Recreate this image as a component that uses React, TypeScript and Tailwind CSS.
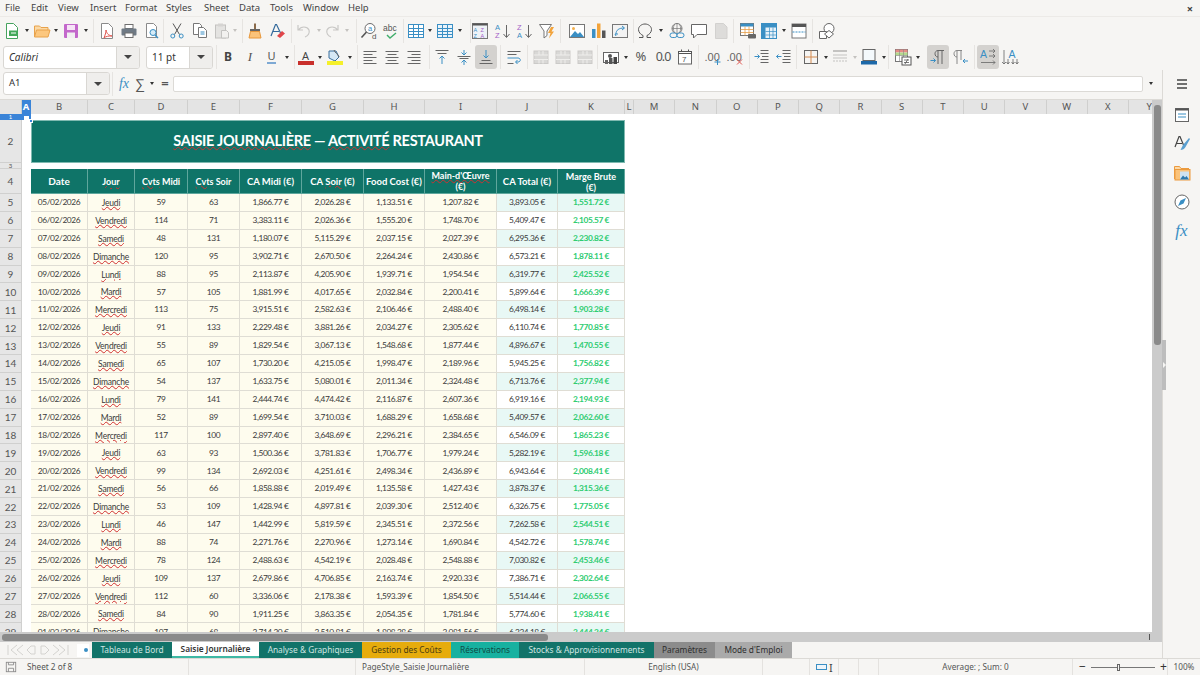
import type { ReactNode } from 'react'

// ---- small icon helpers ----
function Ic({ children }: { children: ReactNode }) {
  return (
    <svg viewBox="0 0 18 18" className="h-[18px] w-[18px]" fill="none" strokeWidth="1">
      {children}
    </svg>
  )
}

function S({ w, children, on }: { w: string; children?: ReactNode; on?: boolean }) {
  return (
    <div className={`flex h-[24px] shrink-0 items-center justify-center rounded-[3px] ${w} ${on ? 'bg-[#d4d2cf]' : ''}`}>
      {children}
    </div>
  )
}

function Caret({ w, off }: { w: string; off?: boolean }) {
  return (
    <div className={`flex h-[24px] shrink-0 items-center justify-center ${w}`}>
      <div className={`h-0 w-0 border-x-[2.5px] border-t-[3px] border-x-transparent ${off ? 'border-t-[#c4c2bf]' : 'border-t-[#333]'}`} />
    </div>
  )
}

function Sep({ cls }: { cls: string }) {
  return <div className={`h-[24px] w-px shrink-0 bg-[#e6e4e1] ${cls}`} />
}

const gridIcon = (c: string, fill: string) => (
  <Ic>
    <rect x="1.5" y="2.5" width="15" height="13" fill={fill} stroke={c} />
    <path d="M1.5 6.5h15M1.5 9.5h15M1.5 12.5h15M6.5 2.5v13M11.5 2.5v13" stroke={c} />
  </Ic>
)

const NewDoc = () => (
  <Ic>
    <path d="M3.5 1.5h7l4 4v11h-11z" fill="#fff" stroke="#46a35e" />
    <rect x="6" y="8.5" width="9" height="5.5" fill="#43a85a" />
    <path d="M8 11h5" stroke="#fff" />
  </Ic>
)
const OpenFolder = () => (
  <Ic>
    <path d="M1.5 15V4h5l1.5 1.5h7V8" fill="#fbd9a5" stroke="#e8a24b" />
    <path d="M1.5 15l2-7h13.5l-2 7z" fill="#fcc77e" stroke="#e8a24b" />
  </Ic>
)
const Floppy = () => (
  <Ic>
    <rect x="2" y="2" width="14" height="14" rx="1" fill="#c368cb" />
    <rect x="5" y="3" width="8" height="5" fill="#f6e4f7" />
    <rect x="5" y="10.5" width="8" height="5.5" fill="#f1eff1" />
  </Ic>
)
const Pdf = () => (
  <Ic>
    <path d="M3.5 1.5h7l4 4v11h-11z" fill="#fff" stroke="#8a8a8a" />
    <path d="M8 8c1 4 2 5 6 6-3 0-6 0-8 2 1-3 2-5 2-8z" stroke="#e0564f" fill="none" />
  </Ic>
)
const Printer = () => (
  <Ic>
    <rect x="5" y="2.5" width="8" height="4" fill="#fff" stroke="#6e6e6e" />
    <rect x="1.5" y="6.5" width="15" height="7" rx="1" fill="#6f7a85" />
    <rect x="5" y="11" width="8" height="4.5" fill="#fff" stroke="#6e6e6e" />
  </Ic>
)
const Preview = () => (
  <Ic>
    <path d="M3.5 1.5h7l3 3v11h-10z" fill="#fff" stroke="#8a8a8a" />
    <circle cx="10" cy="10.5" r="3" fill="#d6ecf8" stroke="#3a8fc4" />
    <path d="M12 13l3 3" stroke="#3a8fc4" strokeWidth="1.5" />
  </Ic>
)
const Scissors = () => (
  <Ic>
    <path d="M5 1.5l6.5 11M13 1.5L6.5 12.5" stroke="#555" />
    <circle cx="4.8" cy="14" r="2" stroke="#3a8fc4" />
    <circle cx="13.2" cy="14" r="2" stroke="#3a8fc4" />
  </Ic>
)
const Copy = () => (
  <Ic>
    <path d="M2.5 1.5h6l2 2v9h-8z" fill="#fff" stroke="#777" />
    <path d="M7.5 5.5h5l3 3v7h-8z" fill="#fff" stroke="#777" />
    <path d="M9.5 10h4M9.5 12h4" stroke="#3a8fc4" />
  </Ic>
)
const Paste = () => (
  <Ic>
    <rect x="2.5" y="3" width="10" height="13" fill="#e4e3e1" stroke="#c3c2c0" />
    <rect x="5" y="1.5" width="5" height="3" fill="#d5d4d2" />
    <path d="M8.5 8.5h5l2 2v5.5h-7z" fill="#f2f1ef" stroke="#c3c2c0" />
  </Ic>
)
const Brush = () => (
  <Ic>
    <path d="M8 1.5h2v6H8z" fill="#8a6a4a" />
    <rect x="4" y="7" width="10" height="2.5" fill="#666" />
    <path d="M4.5 9.5h9l1.5 6.5H3z" fill="#fbc37a" stroke="#e8973a" />
  </Ic>
)
const ClearFmt = () => (
  <Ic>
    <path d="M3 14L7.5 2.5h1L13 12M5 9.5h6" stroke="#356a9c" strokeWidth="1.2" />
    <path d="M9 14l5-5 3 2.5-5 4.5z" fill="#e0464a" />
  </Ic>
)
const Undo = () => (
  <Ic>
    <path d="M3 3v5h5M3.5 8C6 4 12 4 14 8c1 3-1 6-4 7" stroke="#c9c8c6" strokeWidth="1.2" />
  </Ic>
)
const Redo = () => (
  <Ic>
    <path d="M15 3v5h-5M14.5 8C12 4 6 4 4 8c-1 3 1 6 4 7" stroke="#c9c8c6" strokeWidth="1.2" />
  </Ic>
)
const Find = () => (
  <Ic>
    <circle cx="10" cy="6.5" r="5" fill="#fff" stroke="#6a6a6a" />
    <path d="M6.5 10l-5 5.5" stroke="#555" strokeWidth="1.6" />
    <text x="8" y="9" fontSize="7.5" fill="#3a8fc4" fontFamily="Liberation Sans">a</text>
    <text x="12" y="17" fontSize="8" fill="#555" fontFamily="Liberation Sans">d</text>
  </Ic>
)
const Spell = () => (
  <Ic>
    <text x="1" y="9" fontSize="8.5" fill="#555" fontFamily="Liberation Sans">abc</text>
    <path d="M5 13l3 3 6-5" stroke="#3fae6b" strokeWidth="1.4" />
  </Ic>
)
const SortBox = () => (
  <Ic>
    <rect x="1.5" y="1.5" width="15" height="15" fill="#eef2f6" stroke="#777" />
    <rect x="1.5" y="1.5" width="15" height="2" fill="#555" />
    <text x="2.5" y="9.5" fontSize="5.5" fill="#3a8fc4" fontFamily="Liberation Sans">A</text>
    <text x="9.5" y="9.5" fontSize="5.5" fill="#a45ec7" fontFamily="Liberation Sans">Z</text>
    <text x="2.5" y="15.5" fontSize="5.5" fill="#3a8fc4" fontFamily="Liberation Sans">Z</text>
    <text x="9.5" y="15.5" fontSize="5.5" fill="#a45ec7" fontFamily="Liberation Sans">A</text>
  </Ic>
)
const Sort = ({ a, b, c1, c2 }: { a: string; b: string; c1: string; c2: string }) => (
  <Ic>
    <text x="1" y="8" fontSize="7.5" fill={c1} fontFamily="Liberation Sans">{a}</text>
    <text x="1" y="16" fontSize="7.5" fill={c2} fontFamily="Liberation Sans">{b}</text>
    <path d="M12.5 3v12M9.5 12l3 3.5 3-3.5" stroke="#666" />
  </Ic>
)
const Filter = () => (
  <Ic>
    <path d="M1.5 2.5h12L9 9v4.5L6 16V9z" fill="#fff" stroke="#777" />
    <path d="M13 5l-3 6h2.5L11 16.5 16 9.5h-2.5L16 5z" fill="#f2a33a" />
  </Ic>
)
const Picture = () => (
  <Ic>
    <rect x="1.5" y="2.5" width="15" height="13" fill="#fff" stroke="#777" />
    <circle cx="5.5" cy="6.5" r="1.5" fill="#f4b04c" />
    <path d="M2 15l5-6 3 3 2-2 4 5z" fill="#3a8fc4" />
  </Ic>
)
const Chart = () => (
  <Ic>
    <rect x="2" y="7" width="3.5" height="9" fill="#3a8fc4" />
    <rect x="7" y="1.5" width="3.5" height="14.5" fill="#f2a33a" />
    <rect x="12" y="8.5" width="3.5" height="7.5" fill="#555" />
  </Ic>
)
const Pivot = () => (
  <Ic>
    <rect x="1.5" y="2.5" width="15" height="13" fill="#f3f3f3" stroke="#777" />
    <path d="M5 12c0-4 3-6 8-6M11 4l2.5 2L11 8M5 14l-1-2h3" stroke="#3a8fc4" />
  </Ic>
)
const Omega = () => (
  <Ic>
    <path d="M3 15.5h4v-2C4.5 12.5 2.5 10 2.5 7.5 2.5 4.5 5.5 2 9 2s6.5 2.5 6.5 5.5c0 2.5-2 5-4.5 6v2h4" stroke="#555" />
  </Ic>
)
const Link = () => (
  <Ic>
    <circle cx="9" cy="6.5" r="5" stroke="#777" />
    <path d="M4 6.5h10M9 1.5v10M6.5 2.5c-1.5 2.5-1.5 5.5 0 8M11.5 2.5c1.5 2.5 1.5 5.5 0 8" stroke="#777" strokeWidth=".7" />
    <rect x="2" y="11" width="7" height="4.5" rx="2.2" fill="#f6f5f3" stroke="#3a8fc4" />
    <rect x="9" y="11" width="7" height="4.5" rx="2.2" fill="#f6f5f3" stroke="#3a8fc4" />
  </Ic>
)
const Comment = () => (
  <Ic>
    <path d="M1.5 2.5h15v10H7l-3.5 3.5v-3.5h-2z" fill="#fff" stroke="#666" />
  </Ic>
)
const Note = () => (
  <Ic>
    <path d="M3.5 1.5h8l3.5 3.5v11.5H3.5z" fill="#dddcda" stroke="#d2d1cf" />
  </Ic>
)
const PrintArea = () => (
  <Ic>
    <rect x="1.5" y="1.5" width="13" height="12" fill="#fff" stroke="#777" />
    <rect x="1.5" y="1.5" width="13" height="3" fill="#3a8fc4" />
    <path d="M1.5 7.5h13M1.5 10.5h13M6 4.5v9M10 4.5v9" stroke="#e6a04a" strokeWidth=".8" />
    <rect x="9" y="12" width="8" height="4.5" rx="1" fill="#666" />
  </Ic>
)
const Freeze = () => (
  <Ic>
    <rect x="1.5" y="1.5" width="15" height="15" fill="#e6f1f9" stroke="#3a8fc4" />
    <rect x="1.5" y="1.5" width="15" height="4" fill="#3a8fc4" />
    <rect x="1.5" y="1.5" width="4" height="15" fill="#3a8fc4" />
    <path d="M5.5 9.5h11M5.5 13h11M9.5 5.5v11M13 5.5v11" stroke="#3a8fc4" strokeWidth=".7" />
  </Ic>
)
const HeaderIc = () => (
  <Ic>
    <rect x="2" y="2" width="14" height="14" fill="#fff" stroke="#777" />
    <rect x="2" y="2" width="14" height="3" fill="#555" />
    <path d="M2.5 10h13" stroke="#3a8fc4" strokeDasharray="2 1" />
  </Ic>
)
const Shapes = () => (
  <Ic>
    <circle cx="11" cy="6.5" r="5" fill="#fff" stroke="#666" />
    <path d="M1.5 9.5h7v7h-7z" fill="#fff" stroke="#666" />
    <path d="M11 8.5l4.5 3.5-4.5 4-4.5-4z" fill="#fff" stroke="#666" />
  </Ic>
)

// ---- second toolbar icons ----
const AlignLeft = () => (
  <Ic>
    <path d="M2.5 3.5h13M2.5 6.5h9M2.5 9.5h13M2.5 12.5h9M2.5 15.5h13" stroke="#666" />
  </Ic>
)
const AlignCenter = () => (
  <Ic>
    <path d="M2.5 3.5h13M4.5 6.5h9M2.5 9.5h13M4.5 12.5h9M2.5 15.5h13" stroke="#666" />
  </Ic>
)
const AlignRight = () => (
  <Ic>
    <path d="M2.5 3.5h13M6.5 6.5h9M2.5 9.5h13M6.5 12.5h9M2.5 15.5h13" stroke="#666" />
  </Ic>
)
const VTop = () => (
  <Ic>
    <path d="M2.5 2.5h13M4.5 5.5h9" stroke="#666" />
    <path d="M9 8v8M6.5 10.5L9 8l2.5 2.5" stroke="#3a8fc4" />
  </Ic>
)
const VMid = () => (
  <Ic>
    <path d="M2.5 8.5h13" stroke="#666" />
    <path d="M4.5 10.5h9" stroke="#666" />
    <path d="M9 2v5M6.5 4.5L9 7l2.5-2.5M9 17v-5M6.5 14.5L9 12l2.5 2.5" stroke="#3a8fc4" />
  </Ic>
)
const VBot = () => (
  <Ic>
    <path d="M9 2v8M6.5 7.5L9 10l2.5-2.5" stroke="#3a8fc4" />
    <path d="M4.5 12.5h9M2.5 15.5h13" stroke="#666" />
  </Ic>
)
const Wrap = () => (
  <Ic>
    <path d="M2.5 3.5h13M2.5 6.5h9M2.5 15.5h6" stroke="#666" />
    <path d="M2.5 10h10.5c3 0 3 4 0 4h-2M12.5 12l-2 2 2 2" stroke="#3a8fc4" />
  </Ic>
)
const Merge = () => (
  <Ic>
    <rect x="2" y="3" width="14" height="12.5" fill="#d9d8d6" stroke="#cbcac8" />
    <path d="M2 7h14M2 11.5h14M7 3v4M11 3v4M7 11.5v4M11 11.5v4" stroke="#efeeec" />
  </Ic>
)
const Currency = () => (
  <Ic>
    <rect x="1.5" y="4.5" width="15" height="10" fill="#fff" stroke="#666" />
    <circle cx="8" cy="8" r="2" fill="#555" />
    <rect x="7" y="10" width="3.5" height="6" fill="#555" />
    <rect x="11.5" y="9" width="3.5" height="7" fill="#444" />
    <rect x="3" y="12" width="3" height="4" fill="#666" />
  </Ic>
)
const DateIc = () => (
  <Ic>
    <rect x="2.5" y="3.5" width="13" height="12.5" fill="#fff" stroke="#666" />
    <path d="M2.5 3.5h13v2h-13zM5.5 1.5v2M12.5 1.5v2" stroke="#555" />
    <text x="6" y="14" fontSize="8" fill="#555" fontFamily="Liberation Sans">7</text>
  </Ic>
)
const AddDec = () => (
  <Ic>
    <text x="0.5" y="13" fontSize="11" fill="#666" fontFamily="Liberation Sans">.00</text>
    <path d="M13.5 11v6M10.5 14h6" stroke="#3a8fc4" />
  </Ic>
)
const DelDec = () => (
  <Ic>
    <text x="0.5" y="13" fontSize="11" fill="#666" fontFamily="Liberation Sans">.00</text>
    <path d="M11 11.5l5 5M16 11.5l-5 5" stroke="#e0564f" />
  </Ic>
)
const IndentUp = () => (
  <Ic>
    <path d="M7.5 2.5h8M7.5 5.5h8M9 8.5h6.5M7.5 11.5h8M7.5 14.5h8" stroke="#666" />
    <path d="M1.5 8.5h5M4.5 6.5l2 2-2 2" stroke="#3a8fc4" />
  </Ic>
)
const IndentDown = () => (
  <Ic>
    <path d="M7.5 2.5h8M7.5 5.5h8M9 8.5h6.5M7.5 11.5h8M7.5 14.5h8" stroke="#666" />
    <path d="M6.5 8.5h-5M3.5 6.5l-2 2 2 2" stroke="#3a8fc4" />
  </Ic>
)
const Borders = () => (
  <Ic>
    <rect x="2.5" y="2.5" width="13" height="13" stroke="#666" />
    <path d="M9 2.5v13M2.5 9h13" stroke="#d48a4e" />
  </Ic>
)
const BorderStyle = () => (
  <Ic>
    <path d="M2 3h14" stroke="#c4c3c1" strokeWidth="2" />
    <path d="M2 7h14M2 10h14" stroke="#c4c3c1" />
    <path d="M2 13h14" stroke="#c4c3c1" strokeDasharray="2 1" />
  </Ic>
)
const BorderColor = () => (
  <Ic>
    <rect x="3" y="1.5" width="12" height="11" fill="#f4f9fc" stroke="#666" />
    <rect x="1" y="13" width="16" height="3.5" fill="#1c68a8" />
  </Ic>
)
const CondFmt = () => (
  <Ic>
    <rect x="1.5" y="1.5" width="12" height="12" fill="#fff" stroke="#777" />
    <rect x="1.5" y="1.5" width="12" height="3" fill="#e58a86" />
    <rect x="1.5" y="4.5" width="12" height="3" fill="#b4d98d" />
    <path d="M1.5 7.5h12M5.5 1.5v12M9.5 1.5v12" stroke="#888" strokeWidth=".6" />
    <rect x="8" y="9" width="9" height="8" fill="#fff" stroke="#555" />
    <path d="M10 12h5M10 14.5h5M14 11l-3 5" stroke="#555" strokeWidth=".8" />
  </Ic>
)
const Ltr = () => (
  <Ic>
    <path d="M9 16V2.5h6M13 2.5V16M9 2.5C5 2.5 5 9 9 9" stroke="#666" />
    <path d="M1.5 12.5h5M4.5 10.5l2 2-2 2" stroke="#3a8fc4" />
  </Ic>
)
const Rtl = () => (
  <Ic>
    <path d="M6 16V2.5h5M10 2.5V12M6 2.5C2 2.5 2 9 6 9" stroke="#888" />
    <path d="M17 13h-5M14 11l-2 2 2 2" stroke="#3a8fc4" />
  </Ic>
)
const TextH = () => (
  <Ic>
    <text x="1" y="10" fontSize="10.5" fill="#3a8fc4" fontFamily="Liberation Sans">A</text>
    <path d="M10 3h6M14 1l2 2-2 2M10 8h6M14 6l2 2-2 2M2 14.5h14M14 12.5l2 2-2 2" stroke="#666" strokeWidth=".8" />
  </Ic>
)
const TextV = () => (
  <Ic>
    <text x="7.5" y="10" fontSize="10.5" fill="#3a8fc4" fontFamily="Liberation Sans">A</text>
    <path d="M3 2v14M1 14l2 2 2-2M7 11v5M5.5 14l1.5 2 1.5-2M12 11v5M10.5 14l1.5 2 1.5-2M16 11v5M14.5 14l1.5 2 1.5-2" stroke="#666" strokeWidth=".8" />
  </Ic>
)

// ---- data ----
const rows: string[][] = [
  ['05/02/2026', 'Jeudi', '59', '63', '1,866.77', '2,026.28', '1,133.51', '1,207.82', '3,893.05', '1,551.72'],
  ['06/02/2026', 'Vendredi', '114', '71', '3,383.11', '2,026.36', '1,555.20', '1,748.70', '5,409.47', '2,105.57'],
  ['07/02/2026', 'Samedi', '48', '131', '1,180.07', '5,115.29', '2,037.15', '2,027.39', '6,295.36', '2,230.82'],
  ['08/02/2026', 'Dimanche', '120', '95', '3,902.71', '2,670.50', '2,264.24', '2,430.86', '6,573.21', '1,878.11'],
  ['09/02/2026', 'Lundi', '88', '95', '2,113.87', '4,205.90', '1,939.71', '1,954.54', '6,319.77', '2,425.52'],
  ['10/02/2026', 'Mardi', '57', '105', '1,881.99', '4,017.65', '2,032.84', '2,200.41', '5,899.64', '1,666.39'],
  ['11/02/2026', 'Mercredi', '113', '75', '3,915.51', '2,582.63', '2,106.46', '2,488.40', '6,498.14', '1,903.28'],
  ['12/02/2026', 'Jeudi', '91', '133', '2,229.48', '3,881.26', '2,034.27', '2,305.62', '6,110.74', '1,770.85'],
  ['13/02/2026', 'Vendredi', '55', '89', '1,829.54', '3,067.13', '1,548.68', '1,877.44', '4,896.67', '1,470.55'],
  ['14/02/2026', 'Samedi', '65', '107', '1,730.20', '4,215.05', '1,998.47', '2,189.96', '5,945.25', '1,756.82'],
  ['15/02/2026', 'Dimanche', '54', '137', '1,633.75', '5,080.01', '2,011.34', '2,324.48', '6,713.76', '2,377.94'],
  ['16/02/2026', 'Lundi', '79', '141', '2,444.74', '4,474.42', '2,116.87', '2,607.36', '6,919.16', '2,194.93'],
  ['17/02/2026', 'Mardi', '52', '89', '1,699.54', '3,710.03', '1,688.29', '1,658.68', '5,409.57', '2,062.60'],
  ['18/02/2026', 'Mercredi', '117', '100', '2,897.40', '3,648.69', '2,296.21', '2,384.65', '6,546.09', '1,865.23'],
  ['19/02/2026', 'Jeudi', '63', '93', '1,500.36', '3,781.83', '1,706.77', '1,979.24', '5,282.19', '1,596.18'],
  ['20/02/2026', 'Vendredi', '99', '134', '2,692.03', '4,251.61', '2,498.34', '2,436.89', '6,943.64', '2,008.41'],
  ['21/02/2026', 'Samedi', '56', '66', '1,858.88', '2,019.49', '1,135.58', '1,427.43', '3,878.37', '1,315.36'],
  ['22/02/2026', 'Dimanche', '53', '109', '1,428.94', '4,897.81', '2,039.30', '2,512.40', '6,326.75', '1,775.05'],
  ['23/02/2026', 'Lundi', '46', '147', '1,442.99', '5,819.59', '2,345.51', '2,372.56', '7,262.58', '2,544.51'],
  ['24/02/2026', 'Mardi', '88', '74', '2,271.76', '2,270.96', '1,273.14', '1,690.84', '4,542.72', '1,578.74'],
  ['25/02/2026', 'Mercredi', '78', '124', '2,488.63', '4,542.19', '2,028.48', '2,548.88', '7,030.82', '2,453.46'],
  ['26/02/2026', 'Jeudi', '109', '137', '2,679.86', '4,706.85', '2,163.74', '2,920.33', '7,386.71', '2,302.64'],
  ['27/02/2026', 'Vendredi', '112', '60', '3,336.06', '2,178.38', '1,593.39', '1,854.50', '5,514.44', '2,066.55'],
  ['28/02/2026', 'Samedi', '84', '90', '1,911.25', '3,863.35', '2,054.35', '1,781.84', '5,774.60', '1,938.41'],
  ['01/03/2026', 'Dimanche', '107', '68', '2,714.20', '2,510.81', '1,808.28', '2,081.56', '6,224.18', '2,444.24'],
]

const COLS = 'grid grid-cols-[22px_9px_57px_47px_53px_52px_62px_62px_61px_72px_61px_67px_9px_1fr]'
const moreCols = ['M', 'N', 'O', 'P', 'Q', 'R', 'S', 'T', 'U', 'V', 'W', 'X', 'Y']

function W({ children }: { children: ReactNode }) {
  return <span className="underline decoration-[#d03030] decoration-wavy decoration-[0.6px] underline-offset-[0px]">{children}</span>
}

function RowHead({ n, h, on }: { n: number; h: string; on?: boolean }) {
  return (
    <div
      className={`flex items-center justify-center overflow-hidden border-b border-r leading-none ${h} ${
        on ? 'border-[#3a84d8] bg-[#3a84d8] text-white' : 'border-[#d0d0cf] bg-[#e6e6e6] text-[#555]'
      }`}
    >
      {n}
    </div>
  )
}

function ColHead({ label, on }: { label: string; on?: boolean }) {
  return (
    <div
      className={`flex h-[14px] items-center justify-center overflow-hidden border-r text-[9.5px] leading-none ${
        on ? 'border-[#3a84d8] bg-[#3a84d8] font-bold text-white' : 'border-[#cfcfce] bg-[#e4e4e4] text-[#555]'
      }`}
    >
      {label}
    </div>
  )
}

function Th({ children, cls }: { children: ReactNode; cls?: string }) {
  return (
    <div className={`flex items-center justify-center whitespace-nowrap border-b border-r border-[#5fa79d] bg-[#0f7468] text-center font-bold leading-[11px] text-white ${cls ?? 'text-[9.5px]'}`}>
      <div>{children}</div>
    </div>
  )
}

function Td({ children, cls }: { children: ReactNode; cls: string }) {
  return <div className={`flex items-center justify-center overflow-hidden border-b border-r border-[#dfddd4] ${cls}`}>{children}</div>
}

function Grid() {
  return (
    <div className="relative min-w-0 flex-1 overflow-hidden bg-white font-['Lato',sans-serif]">
      {/* column letters */}
      <div className="grid h-[14px] grid-cols-[22px_9px_57px_47px_53px_52px_62px_62px_61px_72px_61px_67px_9px_repeat(13,41.25px)] overflow-hidden font-['Noto_Sans',sans-serif]">
        <div className="border-r border-[#cfcfce] bg-[#e4e4e4]" />
        <ColHead label="A" on />
        {['B', 'C', 'D', 'E', 'F', 'G', 'H', 'I', 'J', 'K', 'L'].map((c) => (
          <ColHead key={c} label={c} />
        ))}
        {moreCols.map((c) => (
          <ColHead key={c} label={c} />
        ))}
      </div>

      {/* row 1 */}
      <div className={COLS}>
        <RowHead n={1} h="h-[6px] text-[6px]" on />
        <div className="h-[6px] border-2 border-b-0 border-[#3a84d8]" />
      </div>
      {/* row 2 */}
      <div className={COLS}>
        <RowHead n={2} h="h-[43px] text-[10px]" />
        <div />
        <div className="col-span-10 flex items-center justify-center border border-[#7fb9b0] bg-[#0f7468] pb-[2px] text-[14.5px] font-bold tracking-[-0.3px] text-white">
          <div>
            <W>SAISIE JOURNALIÈRE</W> — <W>ACTIVITÉ</W> RESTAURANT
          </div>
        </div>
      </div>
      {/* row 3 */}
      <div className={COLS}>
        <RowHead n={3} h="h-[6px] text-[6px]" />
      </div>
      {/* row 4 */}
      <div className={COLS}>
        <RowHead n={4} h="h-[25px] text-[10px]" />
        <div />
        <Th cls="text-[10px]">Date</Th>
        <Th cls="text-[9px]"><W>Jour</W></Th>
        <Th cls="text-[9px]"><W>Cvts</W> Midi</Th>
        <Th cls="text-[9px]"><W>Cvts</W> Soir</Th>
        <Th>CA Midi (€)</Th>
        <Th>CA <W>Soir</W> (€)</Th>
        <Th>Food Cost (€)</Th>
        <Th cls="text-[9px]"><W>Main-d'Œuvre</W><br />(€)</Th>
        <Th>CA Total (€)</Th>
        <Th cls="pt-[1px] text-[9px]">Marge Brute<br />(€)</Th>
      </div>
      {rows.map((r, i) => {
        const alt = i % 2 === 0 ? 'bg-[#e8f8f5]' : 'bg-white'
        return (
          <div key={r[0]} className={`${COLS} text-[8.4px] tracking-[-0.4px] text-[#3a3a3a]`}>
            <RowHead n={i + 5} h="h-[17.9px] text-[10px] tracking-normal" />
            <div />
            <Td cls="bg-[#fefcee]">{r[0]}</Td>
            <Td cls="bg-[#fefcee] pt-[1px] text-[8.5px] leading-[12px] tracking-[-0.2px]"><W>{r[1]}</W></Td>
            <Td cls="bg-[#fefcee]">{r[2]}</Td>
            <Td cls="bg-[#fefcee]">{r[3]}</Td>
            <Td cls="bg-[#fefcee]">{r[4]} €</Td>
            <Td cls="bg-[#fefcee]">{r[5]} €</Td>
            <Td cls="bg-[#fefcee]">{r[6]} €</Td>
            <Td cls="bg-[#fefcee]">{r[7]} €</Td>
            <Td cls={alt}>{r[8]} €</Td>
            <Td cls={`${alt} font-bold text-[#2ecc71]`}>{r[9]} €</Td>
          </div>
        )
      })}
      {/* cell cursor handle */}
      <div className="absolute left-[29px] top-[19px] h-[4px] w-[4px] border border-white bg-[#3a84d8]" />
    </div>
  )
}

function SheetTab({ label, cls }: { label: string; cls: string }) {
  return <div className={`flex h-[16px] shrink-0 items-center justify-center whitespace-nowrap text-[8.3px] leading-none ${cls}`}>{label}</div>
}

function Sidebar() {
  return (
    <div className="relative flex w-[38px] shrink-0 flex-col items-center gap-[11px] border-l border-[#dcdad6] pt-[5px]">
      <svg viewBox="0 0 18 18" className="mb-[2px] h-[18px] w-[18px]" fill="none">
        <path d="M4 5h10M4 9h10M4 13h10" stroke="#444" strokeWidth="1.3" />
      </svg>
      <Ic>
        <rect x="2.5" y="2.5" width="13" height="13" fill="#fff" stroke="#666" />
        <rect x="2.5" y="2.5" width="13" height="2" fill="#555" />
        <path d="M5 8h8M5 11h8" stroke="#3a8fc4" />
      </Ic>
      <Ic>
        <path d="M2 12L6 1.5h1L10.5 10M3.5 8.5H9" stroke="#444" strokeWidth="1.2" />
        <path d="M16 3l-6 7-2.5 5c2 0 4-1 5-3l4.5-8z" fill="#5a9fd0" />
      </Ic>
      <Ic>
        <path d="M1.5 15V2.5h5L8 4.5h8" fill="#fcd9a8" stroke="#eb9a3e" />
        <rect x="2" y="5.5" width="15" height="10.5" fill="#fbc37a" stroke="#eb9a3e" />
        <rect x="7" y="7.5" width="9" height="8" fill="#cfe3f1" />
        <path d="M7 15.5l3-4 2 2 1.5-1.5 2.500 3.500z" fill="#2d7ab0" />
      </Ic>
      <Ic>
        <circle cx="9" cy="9" r="7" fill="#fff" stroke="#666" />
        <path d="M13 5l-2.5 5.5L5 13l2.5-5.5z" fill="#3a8fc4" />
      </Ic>
      <div className="font-['Liberation_Serif',serif] text-[17px] italic leading-[18px] text-[#3a8fc4]">fx</div>
      {/* deck collapse handle */}
      <div className="absolute left-[-1px] top-[270px] flex h-[50px] w-[4px] items-center justify-center bg-[#bdbdbd]">
        <div className="h-0 w-0 border-y-[3px] border-l-[3px] border-y-transparent border-l-[#f6f5f3]" />
      </div>
    </div>
  )
}

export default function App() {
  return (
    <div className="flex h-[675px] w-[1200px] flex-col overflow-hidden bg-[#f6f5f3] font-['Noto_Sans',sans-serif] text-[#333]">
      {/* menu bar */}
      <div className="flex h-[17px] shrink-0 items-center border-b border-[#eceae7] pl-[5px] text-[9.5px] leading-none text-[#444]">
        <span className="w-[26px]">File</span>
        <span className="w-[27px]">Edit</span>
        <span className="w-[32px]">View</span>
        <span className="w-[35px]">Insert</span>
        <span className="w-[41px]">Format</span>
        <span className="w-[38px]">Styles</span>
        <span className="w-[35px]">Sheet</span>
        <span className="w-[31px]">Data</span>
        <span className="w-[33px]">Tools</span>
        <span className="w-[45px]">Window</span>
        <span>Help</span>
        <span className="ml-auto mr-[7px] text-[11px] font-bold text-[#444]">×</span>
      </div>

      {/* standard toolbar */}
      <div className="flex h-[27px] shrink-0 items-center pl-px">
        <S w="w-[22px]"><NewDoc /></S><Caret w="w-[8px]" />
        <S w="w-[22px]"><OpenFolder /></S><Caret w="w-[6px]" />
        <S w="w-[24px]"><Floppy /></S><Caret w="w-[6px]" />
        <Sep cls="ml-[4px] mr-[3px]" />
        <S w="w-[20px]"><Pdf /></S>
        <S w="w-[24px]"><Printer /></S>
        <S w="w-[22px]"><Preview /></S>
        <Sep cls="mr-px" />
        <S w="w-[24px]"><Scissors /></S>
        <S w="w-[22px]"><Copy /></S>
        <S w="w-[22px]"><Paste /></S><Caret w="w-[4px]" off />
        <Sep cls="ml-[5px] mr-[1px]" />
        <S w="w-[22px]"><Brush /></S>
        <S w="w-[22px]"><ClearFmt /></S>
        <Sep cls="ml-[3px] mr-0" />
        <S w="w-[24px]"><Undo /></S><Caret w="w-[5px]" off />
        <S w="w-[22px]"><Redo /></S><Caret w="w-[8px]" off />
        <Sep cls="ml-[5px] mr-[2px]" />
        <S w="w-[20px]"><Find /></S>
        <S w="w-[24px]"><Spell /></S>
        <Sep cls="mr-0" />
        <S w="w-[24px]">{gridIcon('#3a8fc4', '#fff')}</S><Caret w="w-[4px]" />
        <S w="w-[26px]">{gridIcon('#3a8fc4', '#eaf3fa')}</S><Caret w="w-[4px]" />
        <Sep cls="ml-[8px]" />
        <S w="w-[18px]"><SortBox /></S>
        <div className="w-[3px]" />
        <S w="w-[22px]"><Sort a="A" b="Z" c1="#3a8fc4" c2="#a45ec7" /></S>
        <S w="w-[22px]"><Sort a="Z" b="A" c1="#a45ec7" c2="#3a8fc4" /></S>
        <S w="w-[22px]"><Filter /></S>
        <Sep cls="ml-[2px] mr-[5px]" />
        <S w="w-[22px]"><Picture /></S>
        <S w="w-[21px]"><Chart /></S>
        <S w="w-[22px]"><Pivot /></S>
        <Sep cls="ml-[2px]" />
        <S w="w-[22px]"><Omega /></S><Caret w="w-[10px]" />
        <S w="w-[22px]"><Link /></S>
        <S w="w-[22px]"><Comment /></S>
        <S w="w-[22px]"><Note /></S>
        <Sep cls="ml-[1px] mr-[3px]" />
        <S w="w-[22px]"><PrintArea /></S>
        <S w="w-[20px]"><Freeze /></S><Caret w="w-[9px]" />
        <S w="w-[22px]"><HeaderIc /></S>
        <Sep cls="ml-[2px] mr-[3px]" />
        <S w="w-[22px]"><Shapes /></S>
      </div>

      {/* formatting toolbar */}
      <div className="flex h-[26px] shrink-0 items-center pl-[3px]">
        <div className="flex h-[23px] w-[137px] shrink-0 overflow-hidden rounded-[3px] border border-[#d9d7d3] bg-white">
          <div className="flex flex-1 items-center pl-[5px] text-[10px] italic">Calibri</div>
          <div className="flex w-[23px] items-center justify-center border-l border-[#d9d7d3] bg-[#efeeec]">
            <div className="h-0 w-0 border-x-[4px] border-t-[4px] border-x-transparent border-t-[#444]" />
          </div>
        </div>
        <div className="ml-[6px] flex h-[23px] w-[67px] shrink-0 overflow-hidden rounded-[3px] border border-[#d9d7d3] bg-white">
          <div className="flex flex-1 items-center pl-[5px] text-[10px]">11 pt</div>
          <div className="flex w-[23px] items-center justify-center border-l border-[#d9d7d3] bg-[#efeeec]">
            <div className="h-0 w-0 border-x-[4px] border-t-[4px] border-x-transparent border-t-[#444]" />
          </div>
        </div>
        <Sep cls="ml-[3px]" />
        <S w="w-[22px]"><span className="text-[12px] font-bold text-[#444]">B</span></S>
        <S w="w-[22px]"><span className="font-['Liberation_Serif',serif] text-[13px] italic text-[#555]">I</span></S>
        <S w="w-[21px]"><span className="border-b-2 border-[#7ea9d4] text-[11px] leading-[12px] text-[#555]">U</span></S>
        <Caret w="w-[9px]" />
        <Sep cls="ml-[3px] mr-0" />
        <S w="w-[21px]">
          <div className="flex w-[16px] flex-col items-center text-[11px] leading-[11px] text-[#444]">
            A<div className="h-[4px] w-[16px] bg-[#c9302c]" />
          </div>
        </S>
        <Caret w="w-[8px]" />
        <S w="w-[22px]">
          <Ic>
            <path d="M3 3h7l3 6-4 4-6-3z" fill="#d6e8f5" stroke="#3a6f9c" />
            <path d="M8 2c1 3 4 4 5 7" stroke="#666" />
            <rect x="1" y="13" width="16" height="4" fill="#f5f02a" />
          </Ic>
        </S>
        <Caret w="w-[8px]" />
        <Sep cls="ml-[3px] mr-[1px]" />
        <S w="w-[22px]"><AlignLeft /></S>
        <S w="w-[22px]"><AlignCenter /></S>
        <S w="w-[22px]"><AlignRight /></S>
        <Sep cls="ml-[4px] mr-[1px]" />
        <S w="w-[22px]"><VTop /></S>
        <S w="w-[22px]"><VMid /></S>
        <S w="w-[22px]" on><VBot /></S>
        <Sep cls="ml-[3px] mr-[2px]" />
        <S w="w-[22px]"><Wrap /></S>
        <Sep cls="ml-[2px] mr-[2px]" />
        <S w="w-[22px]"><Merge /></S>
        <S w="w-[22px]"><Merge /></S>
        <S w="w-[22px]"><Merge /></S>
        <Sep cls="ml-[1px] mr-[2px]" />
        <S w="w-[22px]"><Currency /></S><Caret w="w-[8px]" />
        <S w="w-[22px]"><span className="text-[13px] text-[#555]">%</span></S>
        <S w="w-[22px]"><span className="text-[12.5px] tracking-[-1px] text-[#555]">0.0</span></S>
        <S w="w-[22px]"><DateIc /></S>
        <Sep cls="ml-[2px] mr-[3px]" />
        <S w="w-[22px]"><AddDec /></S>
        <S w="w-[22px]"><DelDec /></S>
        <Sep cls="ml-[3px] mr-[1px]" />
        <S w="w-[22px]"><IndentUp /></S>
        <S w="w-[22px]"><IndentDown /></S>
        <Sep cls="ml-[1px] mr-[3px]" />
        <S w="w-[22px]"><Borders /></S><Caret w="w-[7px]" />
        <S w="w-[22px]"><BorderStyle /></S><Caret w="w-[7px]" off />
        <S w="w-[22px]"><BorderColor /></S><Caret w="w-[7px]" />
        <Sep cls="ml-[1px] mr-[3px]" />
        <S w="w-[22px]"><CondFmt /></S><Caret w="w-[7px]" />
        <div className="w-[6px]" />
        <S w="w-[22px]" on><Ltr /></S>
        <S w="w-[22px]"><Rtl /></S>
        <Sep cls="ml-[3px] mr-[2px]" />
        <S w="w-[22px]" on><TextH /></S>
        <S w="w-[22px]"><TextV /></S>
      </div>

      {/* main area + deck */}
      <div className="flex min-h-0 flex-1">
        <div className="flex min-w-0 flex-1 flex-col">
          {/* formula bar */}
          <div className="flex h-[30px] shrink-0 items-center border-b border-[#dcdad6] pb-[2px] pl-[3px] pr-[3px]">
            <div className="flex h-[23px] w-[107px] shrink-0 overflow-hidden rounded-[3px] border border-[#d9d7d3] bg-white">
              <div className="flex flex-1 items-center pl-[5px] text-[9.5px]">A1</div>
              <div className="flex w-[23px] items-center justify-center border-l border-[#d9d7d3] bg-[#efeeec]">
                <div className="h-0 w-0 border-x-[4px] border-t-[4px] border-x-transparent border-t-[#444]" />
              </div>
            </div>
            <Sep cls="ml-[2px] mr-[1px]" />
            <S w="w-[20px]"><span className="font-['Liberation_Serif',serif] text-[14px] italic text-[#3a8fc4]">fx</span></S>
            <S w="w-[12px]"><span className="text-[14px] text-[#555]">∑</span></S>
            <Caret w="w-[12px]" />
            <S w="w-[14px]"><span className="text-[13px] font-bold text-[#555]">=</span></S>
            <div className="ml-[1px] h-[16px] min-w-0 flex-1 rounded-[2px] border border-[#dcdad6] bg-white" />
            <Caret w="w-[16px]" />
          </div>

          {/* sheet + vertical scrollbar */}
          <div className="flex min-h-0 flex-1">
            <Grid />
            <div className="flex w-[10px] shrink-0 flex-col bg-[#cbcbcb] pt-[5px]">
              <div className="mx-auto h-[240px] w-[7px] rounded-[3px] bg-[#8a8a8a]" />
            </div>
          </div>

          {/* horizontal scrollbar */}
          <div className="flex h-[10px] shrink-0 items-center bg-[#cbcbcb] pl-[2px]">
            <div className="h-[7px] w-[546px] rounded-[3px] bg-[#8a8a8a]" />
            <div className="ml-auto mr-[12px] h-[6px] w-px bg-[#555]" />
          </div>

          {/* sheet tabs */}
          <div className="flex h-[16px] shrink-0 items-center">
            <div className="flex w-[75px] shrink-0 items-center justify-center">
              <svg viewBox="0 0 62 12" className="h-[12px] w-[62px]" fill="none" stroke="#d4d3d0" strokeWidth="1">
                <path d="M1 1v10M10 1L4 6l6 5M16 1l-6 5 6 5M24 2l-4 4 4 4h4V2zM38 2l4 4-4 4h-4V2zM46 1l6 5-6 5M52 1l6 5-6 5M61 1v10" />
              </svg>
            </div>
            <div className="flex h-[14px] w-[15px] shrink-0 items-center justify-end bg-[#f6f5f3] pr-[1px]">
              <div className="flex h-[13px] w-[12px] items-center justify-end bg-white pr-[1px]">
                <div className="h-[4px] w-[4px] rounded-full bg-[#3a8fc4]" />
              </div>
            </div>
            <div className="w-[2px]" />
            <SheetTab label="Tableau de Bord" cls="w-[80px] bg-[#127369] text-[#cfe5e1]" />
            <SheetTab label="Saisie Journalière" cls="w-[87px] border-b-2 border-[#3fb8a4] bg-white font-semibold text-[#333]" />
            <SheetTab label="Analyse & Graphiques" cls="w-[103px] bg-[#127369] text-[#cfe5e1]" />
            <SheetTab label="Gestion des Coûts" cls="w-[89px] bg-[#e6ac0c] text-[#4a3c10]" />
            <SheetTab label="Réservations" cls="w-[68px] bg-[#17b1a0] text-[#0f4a44]" />
            <SheetTab label="Stocks & Approvisionnements" cls="w-[135px] bg-[#127369] text-[#cfe5e1]" />
            <SheetTab label="Paramètres" cls="w-[61px] bg-[#8c8c8c] text-[#2e2e2e]" />
            <SheetTab label="Mode d'Emploi" cls="w-[77px] bg-[#aaaaaa] text-[#2e2e2e]" />
          </div>
        </div>
        <Sidebar />
      </div>

      {/* status bar */}
      <div className="flex h-[17px] shrink-0 items-center border-t border-[#dcdad6] text-[8.2px] leading-none text-[#555]">
        <div className="flex w-[22px] justify-center">
          <svg viewBox="0 0 14 14" className="h-[12px] w-[12px]" fill="none">
            <rect x="1.5" y="1.5" width="11" height="11" stroke="#888" />
            <path d="M4 1.5v3h6v-3M4 12.5v-4h6v4" stroke="#888" />
          </svg>
        </div>
        <div className="w-[166px] pl-[5px]">Sheet 2 of 8</div>
        <div className="h-full w-[167px] border-l border-[#e4e2df]" />
        <div className="flex h-full w-[229px] items-center whitespace-nowrap border-l border-[#e4e2df] pl-[6px]">PageStyle_Saisie Journalière</div>
        <div className="flex h-full w-[178px] items-center justify-center border-l border-[#e4e2df]">English (USA)</div>
        <div className="h-full w-[47px] border-l border-[#e4e2df]" />
        <div className="flex h-full w-[29px] items-center gap-[2px] border-l border-[#e4e2df] pl-[6px]">
          <div className="h-[6px] w-[11px] shrink-0 border border-[#3a8fc4] bg-[#eef5fa]" />
          <span className="text-[11px] text-[#444]">I</span>
        </div>
        <div className="h-full w-[20px] border-l border-[#e4e2df]" />
        <div className="h-full w-[20px] border-l border-[#e4e2df]" />
        <div className="flex h-full w-[194px] items-center justify-center border-l border-[#e4e2df]">Average: ; Sum: 0</div>
        <div className="flex h-full w-[95px] items-center border-l border-[#e4e2df] pl-[6px]">
          <span className="text-[12px] text-[#333]">−</span>
          <div className="relative mx-[5px] h-px w-[64px] bg-[#777]">
            <div className="absolute left-[26px] top-[-3px] h-[7px] w-[3px] border border-[#666] bg-[#f6f5f3]" />
          </div>
          <span className="text-[12px] text-[#333]">+</span>
        </div>
        <div className="flex h-full flex-1 items-center justify-center border-l border-[#e4e2df]">100%</div>
      </div>
    </div>
  )
}
